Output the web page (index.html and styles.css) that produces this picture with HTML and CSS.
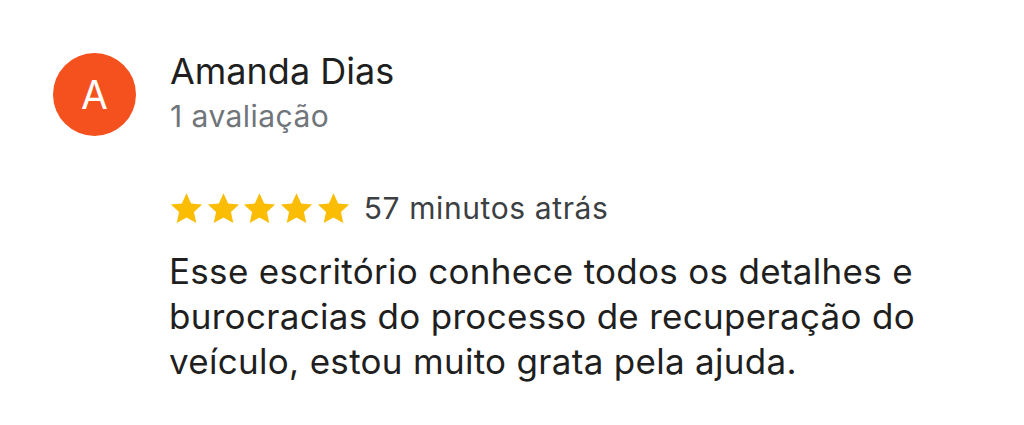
FILE: index.html
```html
<!DOCTYPE html>
<html lang="pt">
<head>
    <meta charset="UTF-8">
    <title>Avaliação</title>
    <link rel="stylesheet" href="styles.css">
</head>
<body>
    <div class="review">
        <div class="review-head">
            <div class="avatar">A</div>
            <div class="author">
                <div class="name">Amanda Dias</div>
                <div class="count">1 avaliação</div>
            </div>
        </div>
        <div class="rating">
            <div class="stars">
                <svg viewBox="0 0 24 24"><path d="M12 1.6l3.2 6.9 7.5.8-5.6 5.1 1.6 7.6L12 18.1l-6.7 3.9 1.6-7.6-5.6-5.1 7.5-.8z"/></svg>
                <svg viewBox="0 0 24 24"><path d="M12 1.6l3.2 6.9 7.5.8-5.6 5.1 1.6 7.6L12 18.1l-6.7 3.9 1.6-7.6-5.6-5.1 7.5-.8z"/></svg>
                <svg viewBox="0 0 24 24"><path d="M12 1.6l3.2 6.9 7.5.8-5.6 5.1 1.6 7.6L12 18.1l-6.7 3.9 1.6-7.6-5.6-5.1 7.5-.8z"/></svg>
                <svg viewBox="0 0 24 24"><path d="M12 1.6l3.2 6.9 7.5.8-5.6 5.1 1.6 7.6L12 18.1l-6.7 3.9 1.6-7.6-5.6-5.1 7.5-.8z"/></svg>
                <svg viewBox="0 0 24 24"><path d="M12 1.6l3.2 6.9 7.5.8-5.6 5.1 1.6 7.6L12 18.1l-6.7 3.9 1.6-7.6-5.6-5.1 7.5-.8z"/></svg>
            </div>
            <span class="time">57 minutos atrás</span>
        </div>
        <p class="text">Esse escritório conhece todos os detalhes e<br>burocracias do processo de recuperação do<br>veículo, estou muito grata pela ajuda.</p>
    </div>
</body>
</html>
```

FILE: styles.css
```css
body {
    margin: 0;
    background-color: #ffffff;
    font-family: 'Inter', 'Roboto', sans-serif;
    color: #1f1f1f;
}
.review {
    padding: 49px 0 0 53px;
}
.review-head {
    display: flex;
    align-items: flex-start;
}
.avatar {
    width: 83px;
    height: 83px;
    margin-top: 4px;
    border-radius: 50%;
    background-color: #f4511e;
    color: #ffffff;
    font-size: 39px;
    display: flex;
    justify-content: center;
    align-items: center;
    flex-shrink: 0;
}
.author {
    margin-left: 34px;
}
.name {
    font-size: 36px;
    line-height: 44px;
    color: #1f1f1f;
}
.count {
    font-size: 30px;
    line-height: 46px;
    letter-spacing: 0.45px;
    color: #70757a;
}
.rating {
    display: flex;
    align-items: center;
    margin: 51px 0 0 116px;
}
.stars {
    display: flex;
    gap: 1.7px;
}
.stars svg {
    width: 35px;
    height: 35px;
    fill: #fbbc04;
}
.time {
    margin-left: 13px;
    font-size: 30px;
    letter-spacing: 0.6px;
    color: #3c4043;
}
.text {
    margin: 23px 0 0 116px;
    font-size: 35px;
    line-height: 45px;
    letter-spacing: 0.3px;
    color: #1f1f1f;
}
```
